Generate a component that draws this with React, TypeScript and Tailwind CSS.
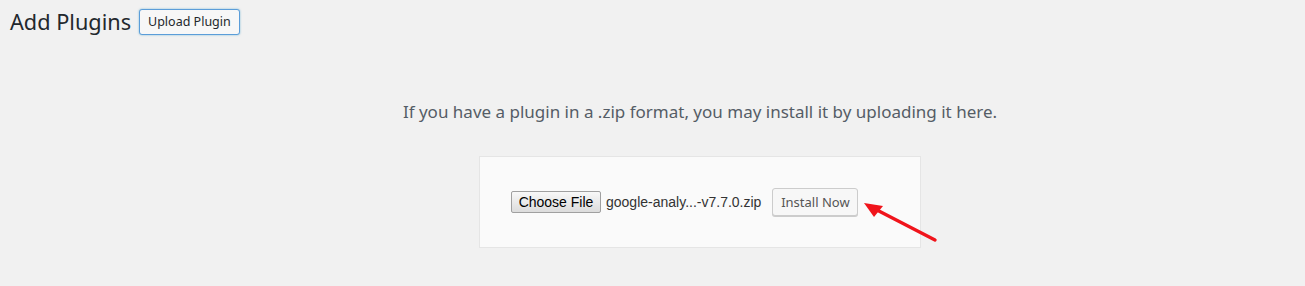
import React from 'react';

const ui = { fontFamily: '"Noto Sans", "Open Sans", sans-serif' };
const arial = { fontFamily: '"Liberation Sans", Arial, sans-serif' };

const RedArrow: React.FC = () => (
  <svg
    className="absolute left-[860px] top-[196px]"
    width="82"
    height="50"
    viewBox="0 0 82 50"
  >
    <line x1="75" y1="44" x2="15" y2="13" stroke="#f0141b" strokeWidth="3.4" strokeLinecap="round" />
    <polygon points="4,7 23,10 14,21" fill="#f0141b" />
  </svg>
);

const App: React.FC = () => {
  return (
    <div className="relative min-h-screen w-full overflow-hidden bg-[#f1f1f1]" style={ui}>
      <header className="flex h-[26px] items-center gap-[8px] pl-[10px] mt-[9px]">
        <h1 className="text-[21.7px] font-normal leading-none text-[#23282d]">Add Plugins</h1>
        <button className="h-[26px] rounded-[3px] border border-[#5b9dd9] bg-[#f7f7f7] px-[8px] text-[12.5px] leading-none text-[#23282d] shadow-[0_0_2px_rgba(30,140,190,0.6)]">
          Upload Plugin
        </button>
      </header>

      <div className="flex flex-col items-center pl-[95px]">
        <p className="mt-[64px] text-[17px] leading-[25px] text-[#555d66]">
          If you have a plugin in a .zip format, you may install it by uploading it here.
        </p>

        <div className="mt-[32px] flex h-[92px] w-[442px] items-center border border-[#e5e5e5] bg-[#fafafa] pl-[31px]">
          <button
            className="h-[22px] w-[90px] rounded-[2px] border border-[#a0a0a0] bg-gradient-to-b from-[#f8f8f8] to-[#dcdcdc] text-[14px] leading-none text-black"
            style={arial}
          >
            Choose File
          </button>
          <span className="ml-[5px] text-[14px] text-[#333]" style={arial}>
            google-analy...-v7.7.0.zip
          </span>
          <button className="ml-[11px] h-[28px] w-[86px] rounded-[3px] border border-[#cccccc] bg-[#f7f7f7] text-[13px] leading-none text-[#555] shadow-[0_1px_0_#cccccc]">
            Install Now
          </button>
        </div>
      </div>

      <RedArrow />
    </div>
  );
};

export default App;
